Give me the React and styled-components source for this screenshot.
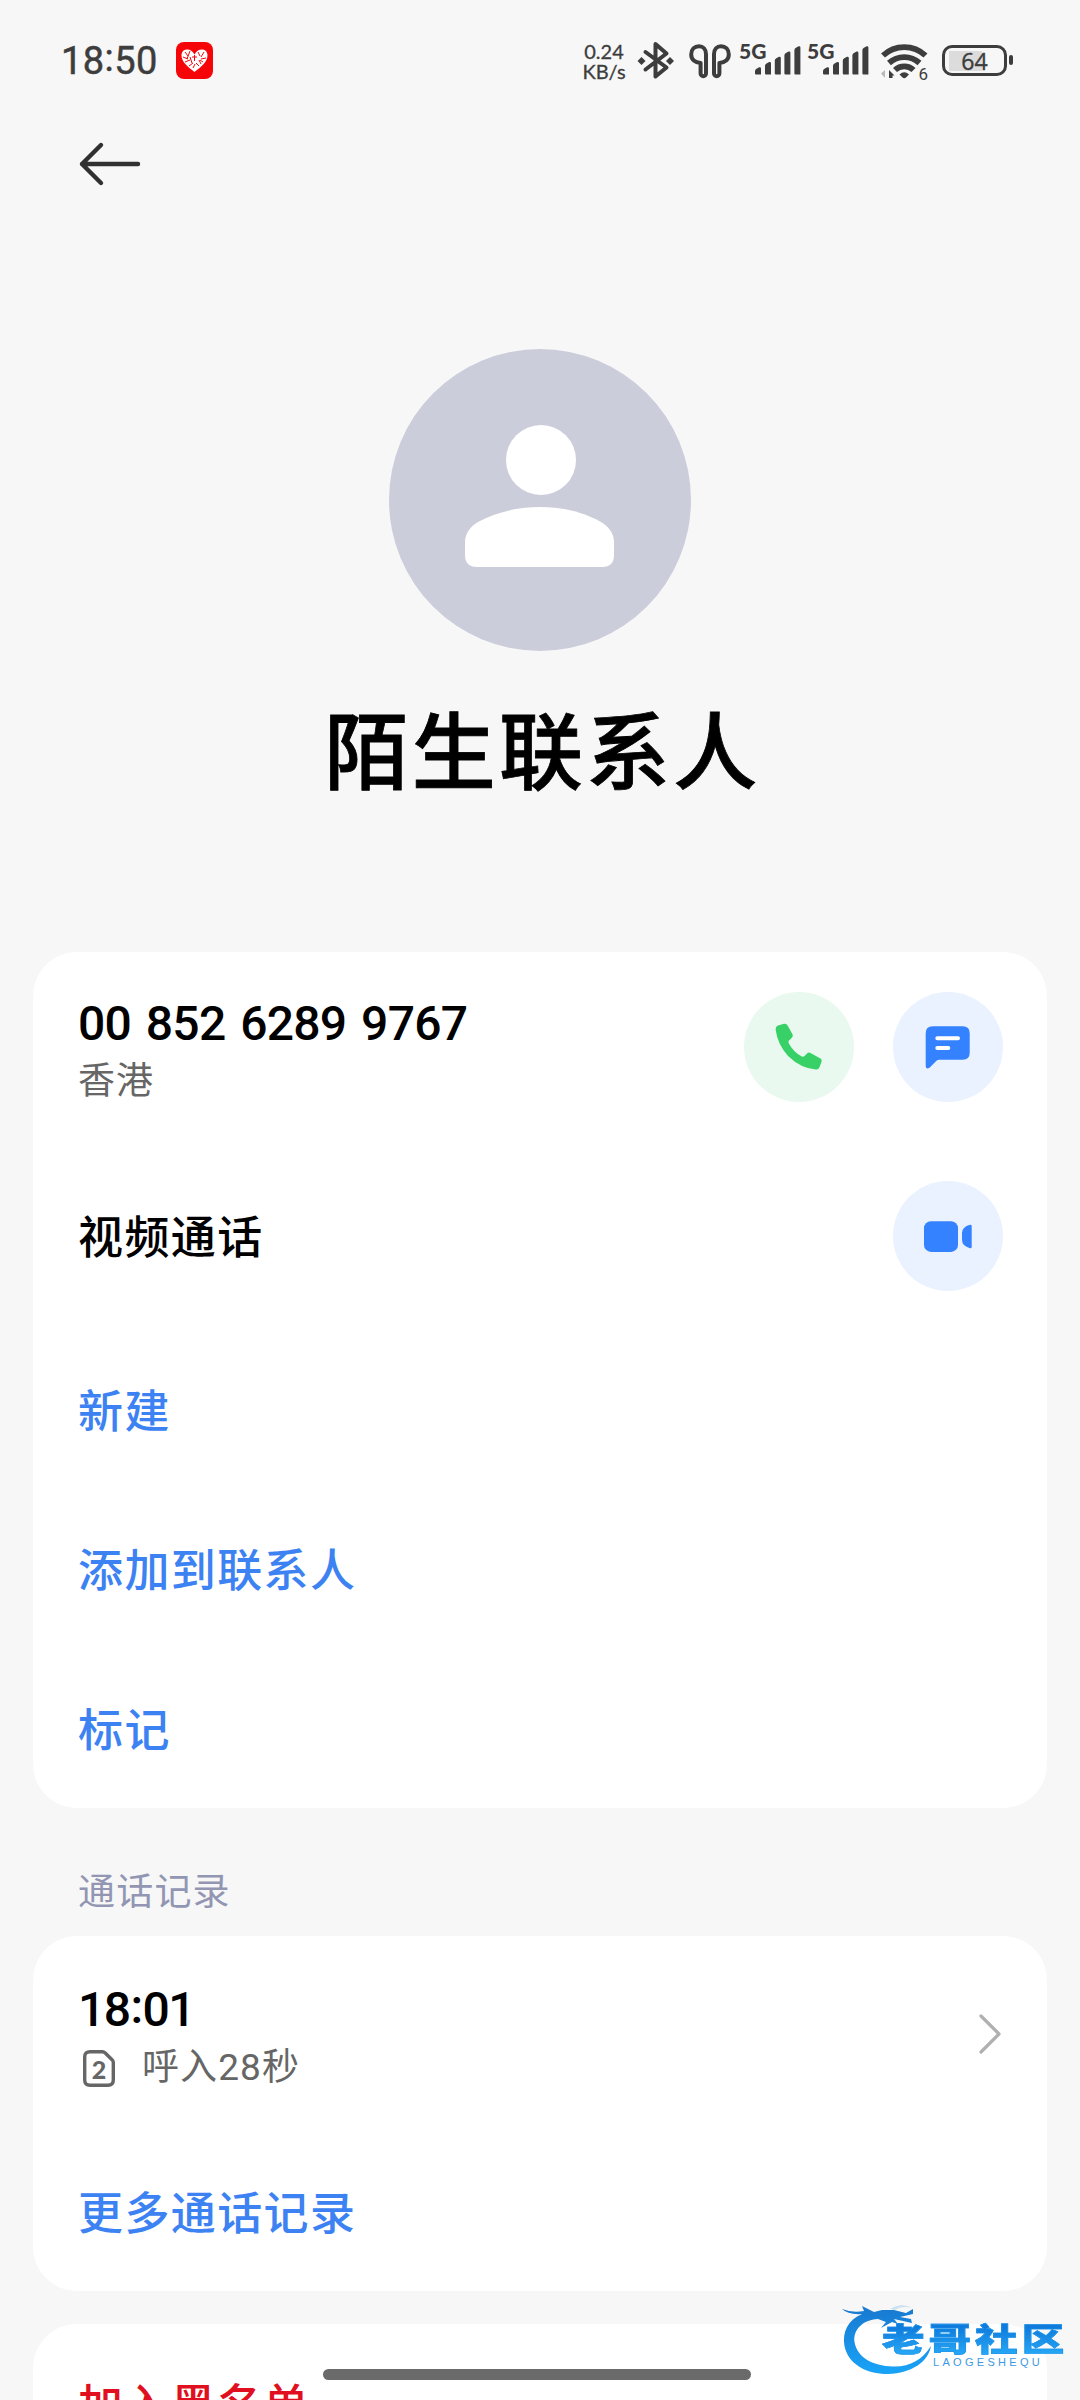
import React from "react";
import styled, { createGlobalStyle } from "styled-components";

const GlobalStyle = createGlobalStyle`
  * {
    box-sizing: border-box;
  }
  body {
    margin: 0;
    background-color: #f7f7f7;
    font-family: Roboto, "Noto Sans CJK SC", sans-serif;
  }
  svg {
    display: block;
    flex-shrink: 0;
    overflow: visible;
  }
`;

const Page = styled.div`
  position: relative;
  width: 1080px;
  height: 2400px;
  overflow: hidden;
  background-color: #f7f7f7;
`;
const StatusBar = styled.div`
  display: flex;
  align-items: center;
  height: 121px;
  padding: 0 68px 0 61px;
  color: #3d3d3d;
`;
const Clock = styled.div`
  width: 115px;
  font-size: 38px;
  line-height: 40px;
  letter-spacing: 0.3px;
  white-space: nowrap;
  -webkit-text-stroke: 0.5px #3d3d3d;
`;
const Colon = styled.span`
  display: inline-block;
  width: ${(props) => props.$width}px;
  text-align: center;
  transform: translateY(-3px);
`;
const StatusIcons = styled.div`
  display: flex;
  align-items: center;
  margin-left: auto;
`;
const Speed = styled.div`
  display: flex;
  flex-direction: column;
  width: 46px;
  margin-right: 10px;
  font-family: Lato, sans-serif;
  font-size: 20px;
  line-height: 20px;
  text-align: center;
  white-space: nowrap;
  -webkit-text-stroke: 0.3px #3d3d3d;
`;
const Signal = styled.div`
  position: relative;
  display: flex;
  justify-content: flex-end;
  width: 60px;
  margin-left: ${(props) => props.$gap}px;
`;
const Network = styled.span`
  position: absolute;
  left: -1px;
  top: -6px;
  font-family: Lato, sans-serif;
  font-size: 21px;
  font-weight: 900;
  line-height: 21px;
`;
const Wifi = styled.div`
  position: relative;
  margin: 0 15px 0 13px;
`;
const WifiVersion = styled.span`
  position: absolute;
  right: -1px;
  bottom: -5px;
  font-size: 17px;
  line-height: 17px;
`;
const Battery = styled.div`
  position: relative;
  display: flex;
  align-items: center;
  justify-content: center;
  width: 65px;
  height: 31px;
  margin-right: 5px;
  border: 3px solid #3d3d3d;
  border-radius: 10px;
  background: linear-gradient(#dcdcdc, #dcdcdc) 4px 3px / 33px 20px no-repeat;
  font-family: "Open Sans", sans-serif;
  font-size: 23px;
  line-height: 24px;
  -webkit-text-stroke: 0.4px #3d3d3d;
  &::after {
    content: "";
    position: absolute;
    right: -9px;
    top: 7px;
    width: 4px;
    height: 10px;
    border-radius: 2px;
    background-color: #3d3d3d;
  }
`;
const TopBar = styled.div`
  height: 228px;
  padding: 20px 78px;
`;
const Hero = styled.div`
  display: flex;
  flex-direction: column;
  align-items: center;
  height: 603px;
`;
const Name = styled.h1`
  margin: 54px 0 0 5px;
  font-size: 84px;
  font-weight: 500;
  line-height: 100px;
  letter-spacing: 3.2px;
  color: #000000;
  -webkit-text-stroke: 0.8px #000000;
`;
const Card = styled.div`
  width: 1014px;
  margin: 0 auto;
  padding: 0 44px 0 45px;
  border-radius: 44px;
  background-color: #ffffff;
`;
const Row = styled.div`
  display: flex;
  align-items: center;
  justify-content: space-between;
  height: ${(props) => props.$height}px;
`;
const RowText = styled.div`
  padding-top: ${(props) => props.$top}px;
`;
const Strong = styled.div`
  font-size: 48px;
  font-weight: 500;
  line-height: 56px;
  letter-spacing: ${(props) => props.$spacing}px;
  word-spacing: 3.6px;
  color: #000000;
`;
const Sub = styled.div`
  display: flex;
  align-items: center;
  font-size: 37px;
  line-height: 60px;
  letter-spacing: 1.1px;
  color: #666666;
`;
const Item = styled.div`
  padding-top: 7px;
  font-size: 45px;
  font-weight: 500;
  line-height: 56px;
  letter-spacing: 1.4px;
  color: ${(props) => props.$color};
`;
const Actions = styled.div`
  display: flex;
  gap: 39px;
`;
const Round = styled.div`
  width: 110px;
  height: 110px;
  border-radius: 50%;
  background-color: ${(props) => props.$bg};
`;
const SectionTitle = styled.div`
  height: 128px;
  padding: 57px 0 0 78px;
  font-size: 37px;
  line-height: 56px;
  letter-spacing: 1.2px;
  color: #9296b3;
`;
const Sim = styled.div`
  position: relative;
  display: flex;
  justify-content: center;
  width: 34px;
  margin: 0 26px 0 4px;
`;
const SimNumber = styled.span`
  position: absolute;
  top: 7px;
  font-family: Lato, sans-serif;
  font-size: 25px;
  font-weight: 900;
  line-height: 24px;
  letter-spacing: 0;
`;
const Spacer = styled.div`
  height: 33px;
`;
const HomeBar = styled.div`
  position: absolute;
  left: 323px;
  bottom: 20px;
  width: 428px;
  height: 11px;
  border-radius: 6px;
  background-color: #6a6a6a;
`;
const Watermark = styled.div`
  position: absolute;
  left: 840px;
  top: 2300px;
  width: 240px;
  height: 80px;
`;
const MarkName = styled.div`
  position: absolute;
  left: 42px;
  top: 22px;
  font-size: 32px;
  font-weight: 900;
  line-height: 36px;
  letter-spacing: 3px;
  white-space: nowrap;
  transform: scaleX(1.33);
  transform-origin: left center;
  background: linear-gradient(#0f7bdc 15%, #27a8f5 90%);
  background-clip: text;
  -webkit-text-stroke: 0.6px #1c93ea;
  color: transparent;
`;
const MarkSub = styled.div`
  position: absolute;
  left: 93px;
  top: 57px;
  font-family: "Liberation Sans", sans-serif;
  font-size: 11px;
  line-height: 11px;
  letter-spacing: 3.3px;
  color: #3c9ae4;
`;

const BLUE = "#3482ff";
const LINK = "#3c82f2";

const links = ["新建", "添加到联系人", "标记"];

const HeartApp = () => (
  <svg width="37" height="37" viewBox="0 0 37 37">
    <rect width="37" height="37" rx="8" fill="#f50508" />
    <path d="M18.500 30 C12 25 5.500 20 5.500 13.500 C5.500 9.500 8 7.500 11 7.500 C14.500 7.500 16.500 9 18.500 12.500 C20.500 9 22.500 7.500 26 7.500 C29 7.500 31.500 9.500 31.500 13.500 C31.500 20 25 25 18.500 30Z" fill="#fff" />
    <path d="M9 10l3 4M14 9l-3 8M7 15l5 2M9 20l5-2M14 15l2 6M13 24l4-3M17 26l2-4M22 10l2 4M28 10l-3 5M30 16l-5 1M23 18l2 4M20 21l3 3M27 20l-3-2M16 15h5M18.500 13v6" stroke="#f50508" strokeWidth="1" />
  </svg>
);

const Bluetooth = () => (
  <svg width="38" height="41" viewBox="0 0 38 41">
    <path d="M8.500 12 L29.500 27.500 L18.500 36.500 V4 L29.500 13.500 L8.500 29.500" fill="none" stroke="#3d3d3d" strokeWidth="4" strokeLinecap="round" strokeLinejoin="round" />
    <path d="M4.500 17 L8.500 21 L4.500 25 L0.500 21Z M33 17 L37 21 L33 25 L29 21Z" fill="#3d3d3d" />
  </svg>
);

const EarbudsSvg = styled.svg`
  margin-left: 14px;
`;
const bud = "M17 10 V29.500 a2.700 2.700 0 0 1 -5.400 0 V19 C6 18.500 2.200 15.500 2.200 10.500 C2.200 5.500 5.500 2.200 10 2.200 C14 2.200 17 5.500 17 10Z";
const Earbuds = () => (
  <EarbudsSvg width="42" height="34" viewBox="0 0 42 34">
    <g fill="none" stroke="#3d3d3d" strokeWidth="4" strokeLinejoin="round">
      <path d={bud} />
      <path d={bud} transform="translate(42 0) scale(-1 1)" />
    </g>
  </EarbudsSvg>
);

const SignalBars = ({ gap }) => (
  <Signal $gap={gap}>
    <Network>5G</Network>
    <svg width="45" height="29" viewBox="0 0 45 29">
      {[0, 10, 19.8, 29.4, 39.4].map((x, i) => {
        const top = 21 - i * 5.250;
        return (
          <path
            key={x}
            d={`M${x} ${top + 4} Q${x} ${top + 2.500} ${x + 1.500} ${top + 1.800} L${x + 4.200} ${top + 0.300} Q${x + 6} ${top} ${x + 6} ${top + 1.500} V28.500 H${x + 1} Q${x} 28.500 ${x} 27.500Z`}
            fill="#3d3d3d"
          />
        );
      })}
    </svg>
  </Signal>
);

const WifiIcon = () => (
  <Wifi>
    <svg width="46" height="34" viewBox="0 0 46 34">
      <g fill="none" stroke="#3d3d3d" strokeWidth="5.800">
        <path d="M2 11.500 A31 31 0 0 1 44.500 11.500" />
        <path d="M8 19 A22.500 22.500 0 0 1 38.500 19" />
        <path d="M14 26 A13.500 13.500 0 0 1 32.500 26" />
      </g>
      <path d="M18.500 30.500 Q23.200 26 28 30.500 L25 33.500 Q23.200 35 21.500 33.500Z" fill="#3d3d3d" />
      <path d="M4 26 V34 L0 29.500Z" fill="#b9b9b9" />
      <path d="M8 34 V26 L13.500 31.500 H11.500 V34Z" fill="#3d3d3d" />
    </svg>
    <WifiVersion>6</WifiVersion>
  </Wifi>
);

const BackIcon = () => (
  <svg width="64" height="46" viewBox="0 0 64 46">
    <path d="M23 4 L4 23 L23 42 M4 23 H60" fill="none" stroke="#303030" strokeWidth="4.400" strokeLinecap="round" strokeLinejoin="round" />
  </svg>
);

const Avatar = () => (
  <svg width="302" height="302" viewBox="0 0 302 302">
    <circle cx="151" cy="151" r="151" fill="#cccddb" />
    <circle cx="152" cy="111" r="35" fill="#fff" />
    <path d="M76 193 C76 184 82 177 89 173 C108 163 128 158 151 158 C174 158 194 163 212 173 C219 177 225 184 225 193 V206 Q225 218 213 218 H88 Q76 218 76 206Z" fill="#fff" />
  </svg>
);

const PhoneIcon = () => (
  <svg width="110" height="110" viewBox="0 0 110 110">
    <path d="M34 33.500 L40 31.800 Q42.500 31.400 43.600 33.400 L48.600 42.600 Q49.300 44.300 48 45.500 L45 48.500 Q44 49.700 44.600 51 Q49 59.500 57 64 Q59 65.300 60.500 64 L63 61.500 Q64.500 60 66.500 61 L76.500 66.500 Q78.200 67.600 77.600 69.600 L75.500 75.300 Q74.600 77.700 72 77.600 Q57 76.500 44 64 Q33.500 52 31.700 38 Q31.400 34.600 34 33.500Z" fill="#38d167" />
  </svg>
);

const MessageIcon = () => (
  <svg width="110" height="110" viewBox="0 0 110 110">
    <path d="M39.700 34.300 H69.700 Q76.700 34.300 76.700 41.300 V60.700 Q76.700 67.700 69.700 67.700 H46 Q44.500 67.700 43.500 68.700 L36.500 75.700 Q32.700 77.700 32.700 74 V41.300 Q32.700 34.300 39.700 34.300Z" fill={BLUE} />
    <path d="M44.300 46.300 H65 M44.300 56 H55.300" stroke="#fff" strokeWidth="4" strokeLinecap="round" />
  </svg>
);

const VideoIcon = () => (
  <svg width="110" height="110" viewBox="0 0 110 110">
    <rect x="31" y="40.300" width="34" height="30.600" rx="7" fill={BLUE} />
    <path d="M78.700 45 V66 Q78.700 67.500 77 67.200 Q69 65 69 59 V52 Q69 46 77 43.800 Q78.700 43.500 78.700 45Z" fill={BLUE} />
  </svg>
);

const SimIcon = () => (
  <Sim>
    <svg width="32" height="37" viewBox="0 0 32 37">
      <path d="M7 1.700 H19.500 Q21 1.700 22 2.800 L29.300 10 Q30.300 11 30.300 12.500 V30 Q30.300 35.300 25 35.300 H7 Q1.700 35.300 1.700 30 V7 Q1.700 1.700 7 1.700Z" fill="none" stroke="#666" strokeWidth="3.400" />
    </svg>
    <SimNumber>2</SimNumber>
  </Sim>
);

const Chevron = () => (
  <svg width="24" height="40" viewBox="0 0 24 40">
    <path d="M2 2 L20 20 L2 38" fill="none" stroke="#b0b0b0" strokeWidth="3.200" strokeLinecap="round" strokeLinejoin="round" />
  </svg>
);

const Dragon = () => (
  <svg width="100" height="80" viewBox="0 0 100 80">
    <defs>
      <linearGradient id="dragon" x1="0" y1="0" x2="0" y2="1">
        <stop offset="0" stopColor="#1878cf" />
        <stop offset="1" stopColor="#18a4f8" />
      </linearGradient>
    </defs>
    <g fill="url(#dragon)">
      <path d="M22 14 C8 20 2 32 4.500 46 C8 64 26 74 48 74 C72 73 88 62 91 46 C82 60 70 67 53 66.500 C32 66 17 57 14.500 42 C13 30 22 20 38 19 L46 22 L41 28 L52 22 L58 24 L54 19 L72 23 L71 19 L60 17 L73 14 L73 9 L66 13 L54 10 L42 10 L34 12 L22 6 L24 11 Q12 13 2 9 Q8 15 22 14Z" />
      <path d="M50 9 Q62 2 72 8 Q62 5 55 10Z" opacity="0.200" />
    </g>
  </svg>
);

const App = () => {
  return (
    <Page>
      <GlobalStyle />
      <StatusBar>
        <Clock>18<Colon $width={10}>:</Colon>50</Clock>
        <HeartApp />
        <StatusIcons>
          <Speed>
            <span>0.24</span>
            <span>KB/s</span>
          </Speed>
          <Bluetooth />
          <Earbuds />
          <SignalBars gap={9} />
          <SignalBars gap={8} />
          <WifiIcon />
          <Battery>64</Battery>
        </StatusIcons>
      </StatusBar>

      <TopBar>
        <BackIcon />
      </TopBar>

      <Hero>
        <Avatar />
        <Name>陌生联系人</Name>
      </Hero>

      <Card>
        <Row $height={189}>
          <RowText $top={14}>
            <Strong $spacing={-0.75}>00 852 6289 9767</Strong>
            <Sub>香港</Sub>
          </RowText>
          <Actions>
            <Round $bg="#e9f9ef"><PhoneIcon /></Round>
            <Round $bg="#eaf2ff"><MessageIcon /></Round>
          </Actions>
        </Row>
        <Row $height={189}>
          <Item $color="#000000">视频通话</Item>
          <Round $bg="#eaf2ff"><VideoIcon /></Round>
        </Row>
        {links.map((link) => (
          <Row key={link} $height={159.33}>
            <Item $color={LINK}>{link}</Item>
          </Row>
        ))}
      </Card>

      <SectionTitle>通话记录</SectionTitle>

      <Card>
        <Row $height={196}>
          <RowText $top={13}>
            <Strong $spacing={-1.5}>18<Colon $width={13}>:</Colon>01</Strong>
            <Sub><SimIcon />呼入28秒</Sub>
          </RowText>
          <Chevron />
        </Row>
        <Row $height={159}>
          <Item $color={LINK}>更多通话记录</Item>
        </Row>
      </Card>

      <Spacer />

      <Card>
        <Row $height={160}>
          <Item $color="#e01020">加入黑名单</Item>
        </Row>
      </Card>

      <HomeBar />
      <Watermark>
        <Dragon />
        <MarkName>老哥社区</MarkName>
        <MarkSub>LAOGESHEQU</MarkSub>
      </Watermark>
    </Page>
  );
};

export default App;
